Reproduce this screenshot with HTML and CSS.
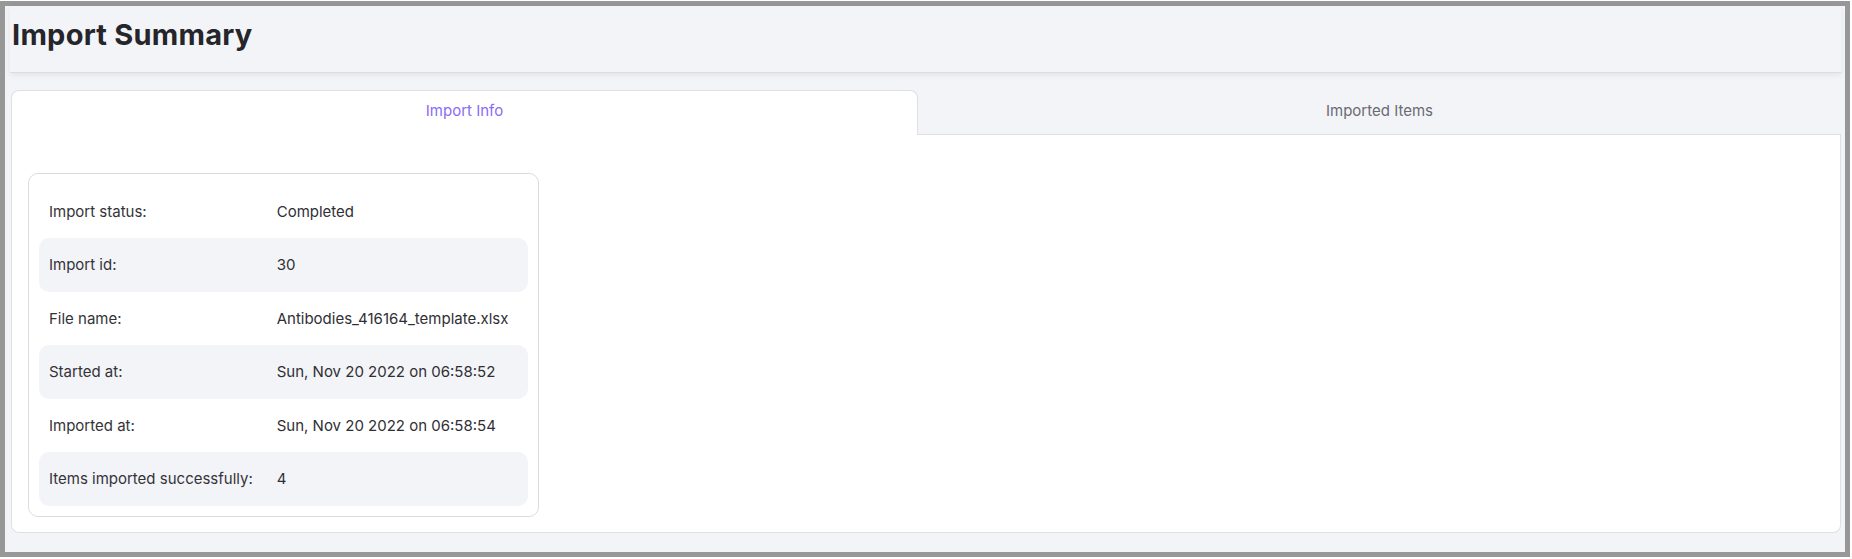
FILE: index.html
```html
<!DOCTYPE html>
<html lang="en">
<head>
<meta charset="utf-8">
<title>Import Summary</title>
<link rel="stylesheet" href="styles.css">
</head>
<body>
<div class="frame">
  <header class="page-header">
    <h1 class="page-title">Import Summary</h1>
  </header>
  <section class="tabs">
    <div class="tab-list">
      <button class="tab tab-active">Import Info</button>
      <button class="tab">Imported Items</button>
    </div>
    <div class="tab-panel">
      <div class="info-card">
        <div class="info-row"><span class="info-label">Import status:</span><span class="info-value">Completed</span></div>
        <div class="info-row info-row-shaded"><span class="info-label">Import id:</span><span class="info-value">30</span></div>
        <div class="info-row"><span class="info-label">File name:</span><span class="info-value">Antibodies_416164_template.xlsx</span></div>
        <div class="info-row info-row-shaded"><span class="info-label">Started at:</span><span class="info-value">Sun, Nov 20 2022 on 06:58:52</span></div>
        <div class="info-row"><span class="info-label">Imported at:</span><span class="info-value">Sun, Nov 20 2022 on 06:58:54</span></div>
        <div class="info-row info-row-shaded"><span class="info-label">Items imported successfully:</span><span class="info-value">4</span></div>
      </div>
    </div>
  </section>
</div>
</body>
</html>
```
FILE: styles.css
```css
html, body {
  margin: 0;
  padding: 0;
  background: #ffffff;
}

body {
  padding-top: 1px;
  font-family: Inter, "Open Sans", "Liberation Sans", sans-serif;
  color: #2f2f34;
}

.frame {
  box-sizing: border-box;
  width: 1850px;
  height: 556px;
  border: 5px solid #979797;
  background: #f3f4f8;
  padding: 0 4px 0 5px;
  display: flex;
  flex-direction: column;
}

.page-header {
  box-sizing: border-box;
  height: 67px;
  padding: 11px 0 0 2px;
  border-bottom: 1px solid #dcdde2;
  box-shadow: 0 2px 6px rgba(0, 0, 0, 0.07);
}

.page-title {
  margin: 0;
  font-size: 29px;
  line-height: 36px;
  font-weight: 700;
  color: #25252a;
  letter-spacing: 0.25px;
}

.tabs {
  margin: 17px 0 0 1px;
  display: flex;
  flex-direction: column;
}

.tab-list {
  display: grid;
  grid-template-columns: 907fr 923fr;
}

.tab {
  box-sizing: border-box;
  height: 45px;
  margin: 0;
  padding: 0 0 4px;
  font-family: inherit;
  font-size: 15px;
  line-height: 40px;
  text-align: center;
  color: #6a6a73;
  background: transparent;
  border: 0;
  border-top: 1px solid transparent;
  border-bottom: 1px solid #dfe0e4;
  cursor: pointer;
}

.tab-active {
  color: #8a6cf6;
  background: #ffffff;
  border: 1px solid #dfe0e4;
  border-bottom: 0;
  border-radius: 8px 8px 0 0;
}

.tab-panel {
  background: #ffffff;
  border: 1px solid #dfe0e4;
  border-top: 0;
  border-radius: 0 0 8px 8px;
  padding: 38px 16px 15px 15.5px;
}

.info-card {
  box-sizing: border-box;
  width: 511px;
  border: 1px solid #dcdce0;
  border-radius: 10px;
  padding: 10.5px 10px;
  background: #ffffff;
}

.info-row {
  display: grid;
  grid-template-columns: 227.7px 1fr;
  align-items: center;
  height: 53.5px;
  padding: 0 10.5px;
  border-radius: 10px;
  font-size: 15px;
}

.info-row-shaded {
  background: #f3f4f8;
}

.info-label {
  color: #333338;
}

.info-value {
  color: #2f2f34;
}
```
